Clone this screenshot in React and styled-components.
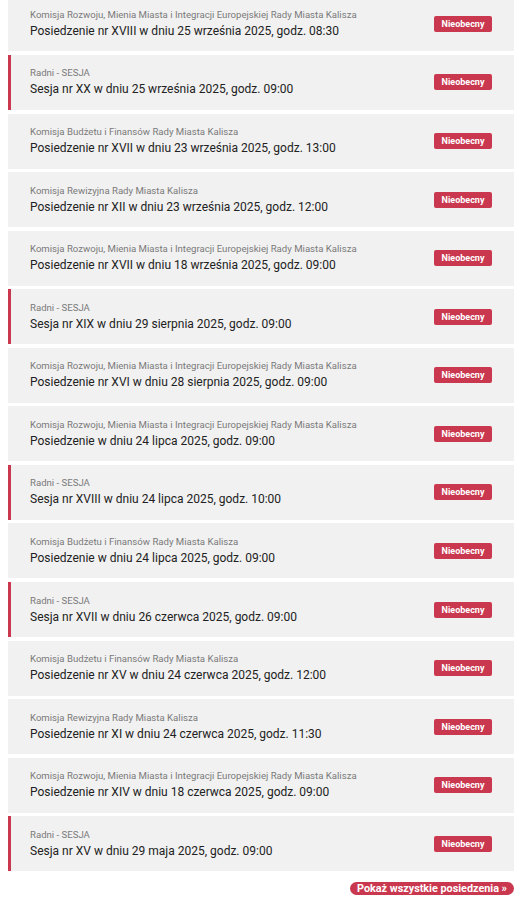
import React from "react"
import styled, { createGlobalStyle } from "styled-components"

const GlobalStyle = createGlobalStyle`
  body {
    margin: 0;
    background: #fff;
    font-family: Roboto, "Noto Sans", Arial, sans-serif;
  }
`
const Page = styled.div`
  margin: -3.6px 6px 0 8px;
`
const List = styled.ul`
  list-style: none;
  margin: 0;
  padding: 0;
`
const Meeting = styled.li`
  display: flex;
  align-items: center;
  justify-content: space-between;
  height: 55px;
  box-sizing: border-box;
  margin-bottom: 3.57px;
  padding: 0 22px 0 22px;
  background: #f1f1f1;
  box-shadow: ${(p) => (p.$session ? "inset 3px 0 0 #c9384f" : "none")};
`
const Info = styled.div`
  display: flex;
  flex-direction: column;
`
const Body = styled.span`
  font-size: 9.6px;
  line-height: 14px;
  color: #7a7a7a;
`
const Title = styled.span`
  font-size: 12px;
  line-height: 18px;
  color: #222;
`
const Badge = styled.span`
  display: inline-flex;
  align-items: center;
  justify-content: center;
  width: 58px;
  height: 16px;
  border-radius: 2px;
  background: #c9384f;
  color: #fff;
  font-size: 9px;
  font-weight: 700;
`
const Footer = styled.div`
  display: flex;
  justify-content: flex-end;
  padding-top: 7.5px;
`
const MoreButton = styled.a`
  display: inline-flex;
  align-items: center;
  height: 13px;
  padding: 0 7px;
  border-radius: 7px;
  background: #c9384f;
  color: #fff;
  font-size: 10.8px;
  font-weight: 700;
  text-decoration: none;
`

const ROZWOJ = "Komisja Rozwoju, Mienia Miasta i Integracji Europejskiej Rady Miasta Kalisza"
const BUDZET = "Komisja Budżetu i Finansów Rady Miasta Kalisza"
const REWIZ = "Komisja Rewizyjna Rady Miasta Kalisza"
const SESJA = "Radni - SESJA"

const meetings = [
  [ROZWOJ, "Posiedzenie nr XVIII w dniu 25 września 2025, godz. 08:30"],
  [SESJA, "Sesja nr XX w dniu 25 września 2025, godz. 09:00"],
  [BUDZET, "Posiedzenie nr XVII w dniu 23 września 2025, godz. 13:00"],
  [REWIZ, "Posiedzenie nr XII w dniu 23 września 2025, godz. 12:00"],
  [ROZWOJ, "Posiedzenie nr XVII w dniu 18 września 2025, godz. 09:00"],
  [SESJA, "Sesja nr XIX w dniu 29 sierpnia 2025, godz. 09:00"],
  [ROZWOJ, "Posiedzenie nr XVI w dniu 28 sierpnia 2025, godz. 09:00"],
  [ROZWOJ, "Posiedzenie w dniu 24 lipca 2025, godz. 09:00"],
  [SESJA, "Sesja nr XVIII w dniu 24 lipca 2025, godz. 10:00"],
  [BUDZET, "Posiedzenie w dniu 24 lipca 2025, godz. 09:00"],
  [SESJA, "Sesja nr XVII w dniu 26 czerwca 2025, godz. 09:00"],
  [BUDZET, "Posiedzenie nr XV w dniu 24 czerwca 2025, godz. 12:00"],
  [REWIZ, "Posiedzenie nr XI w dniu 24 czerwca 2025, godz. 11:30"],
  [ROZWOJ, "Posiedzenie nr XIV w dniu 18 czerwca 2025, godz. 09:00"],
  [SESJA, "Sesja nr XV w dniu 29 maja 2025, godz. 09:00"],
]

export default function App() {
  return (
    <Page>
      <GlobalStyle />
      <List>
        {meetings.map(([body, title], i) => (
          <Meeting key={i} $session={body === SESJA}>
            <Info>
              <Body>{body}</Body>
              <Title>{title}</Title>
            </Info>
            <Badge>Nieobecny</Badge>
          </Meeting>
        ))}
      </List>
      <Footer>
        <MoreButton href="#">Pokaż wszystkie posiedzenia »</MoreButton>
      </Footer>
    </Page>
  )
}
